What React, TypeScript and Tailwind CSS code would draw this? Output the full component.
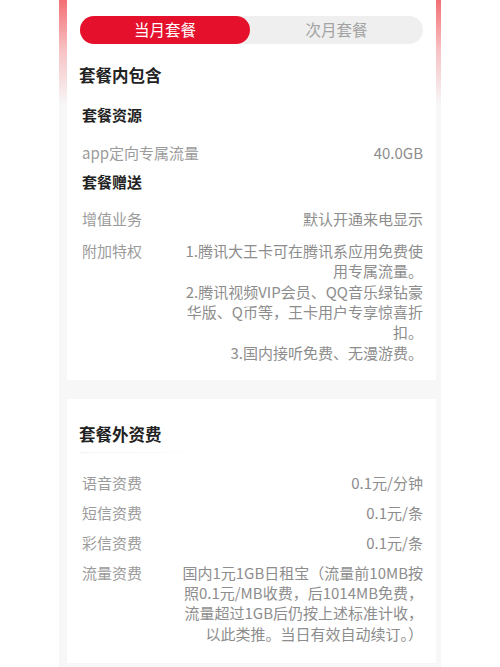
import React from 'react';

const FONT = "font-['Noto_Sans_CJK_SC','Noto_Sans',sans-serif]";

type Row = { label: string; value: string[] };

function InfoRow({ label, value, className = '' }: Row & { className?: string }) {
  return (
    <div className={`flex justify-between pl-[2px] ${className}`}>
      <span className="text-[15px] leading-[20.4px] text-[#9b9b9b] whitespace-nowrap">{label}</span>
      <div className="flex flex-col items-end text-right">
        {value.map((line) => (
          <span key={line} className="text-[15px] leading-[20.4px] text-[#8d8d8d] whitespace-nowrap">
            {line}
          </span>
        ))}
      </div>
    </div>
  );
}

const FEES: Row[] = [
  { label: '语音资费', value: ['0.1元/分钟'] },
  { label: '短信资费', value: ['0.1元/条'] },
  { label: '彩信资费', value: ['0.1元/条'] },
  {
    label: '流量资费',
    value: [
      '国内1元1GB日租宝（流量前10MB按',
      '照0.1元/MB收费，后1014MB免费，',
      '流量超过1GB后仍按上述标准计收，',
      '以此类推。当日有效自动续订。）',
    ],
  },
];

export default function App() {
  return (
    <div className={`w-full h-[667px] overflow-hidden bg-white flex justify-center ${FONT}`}>
      <div className="w-[382px] h-full pl-[8px] pr-[5px] bg-[linear-gradient(to_bottom,#f36f74_0px,#f7c2c4_50px,#f7f7f7_105px)]">
        {/* Current plan card */}
        <div className="bg-white px-[13px] pt-[16px] pb-[17px]">
          <div className="flex h-[28px] rounded-full bg-[#efefef]">
            <div className="w-[170px] rounded-full bg-[#e5102b] flex items-center justify-center text-[15.5px] text-white">
              当月套餐
            </div>
            <div className="flex-1 flex items-center justify-center text-[15.5px] text-[#a3a3a3]">
              次月套餐
            </div>
          </div>

          <h2 className="mt-[19px] -ml-[1px] text-[16.5px] leading-[24px] font-bold text-[#222]">套餐内包含</h2>
          <h3 className="mt-[17px] pl-[2px] text-[15px] leading-[22px] font-bold text-[#222]">套餐资源</h3>
          <InfoRow className="mt-[17px]" label="app定向专属流量" value={['40.0GB']} />
          <h3 className="mt-[8px] pl-[2px] text-[15px] leading-[22px] font-bold text-[#222]">套餐赠送</h3>
          <InfoRow className="mt-[16px]" label="增值业务" value={['默认开通来电显示']} />
          <InfoRow
            className="mt-[11px]"
            label="附加特权"
            value={[
              '1.腾讯大王卡可在腾讯系应用免费使',
              '用专属流量。',
              '2.腾讯视频VIP会员、QQ音乐绿钻豪',
              '华版、Q币等，王卡用户专享惊喜折',
              '扣。',
              '3.国内接听免费、无漫游费。',
            ]}
          />
        </div>

        {/* Extra fees card */}
        <div className="mt-[19px] bg-white px-[13px] pt-[23px] pb-[19px]">
          <h2 className="-ml-[1px] text-[16.5px] leading-[24px] font-bold text-[#222]">套餐外资费</h2>
          <div className="mt-[6px] h-px w-[130px] bg-[linear-gradient(to_right,#f3f3f3,#ffffff)]" />
          <div className="mt-[20px] flex flex-col gap-[9.4px]">
            {FEES.map((row) => (
              <InfoRow key={row.label} label={row.label} value={row.value} />
            ))}
          </div>
        </div>
      </div>
    </div>
  );
}
